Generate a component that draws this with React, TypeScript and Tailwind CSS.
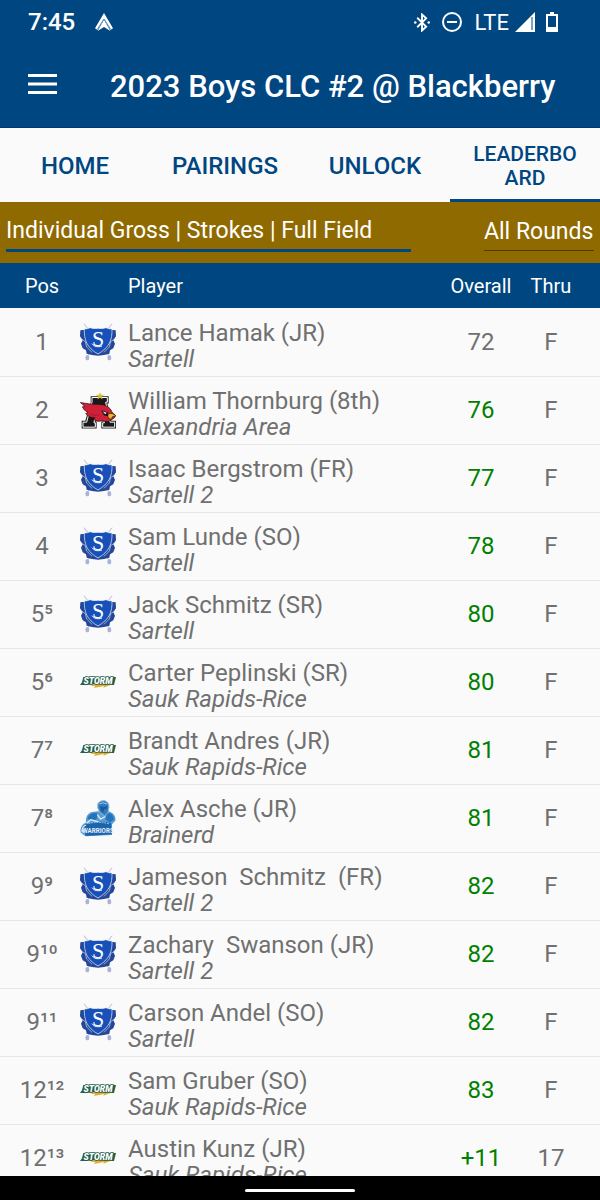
import type { ComponentType } from "react";

const SartellLogo = () => (
  <svg viewBox="30 36 108 114" className="h-[38px] w-9" aria-hidden="true">
    {/* Crossed clubs */}
    <g stroke="#b3bad9" strokeWidth="3" fill="none">
      <path d="M42 38 L121 140" />
      <path d="M126 38 L49 140" />
    </g>
    <g fill="#a9b3da">
      <ellipse cx="52" cy="140" rx="6" ry="8" />
      <ellipse cx="118" cy="140" rx="6" ry="8" />
    </g>
    {/* Ribbon */}
    <g fill="#24479a">
      <path d="M31 58 L46 56 L50 88 L60 106 L84 128 L84 134 L66 132 L50 128 L48 118 L38 112 L33 98 L38 88 L30 76 Z" />
      <path d="M137 58 L122 56 L118 88 L108 106 L84 128 L84 134 L102 132 L118 128 L120 118 L130 112 L135 98 L130 88 L138 76 Z" />
    </g>
    <path
      d="M34 84 L46 92 L50 108 L66 124 M134 84 L122 92 L118 108 L102 124"
      stroke="#d3ddf3"
      strokeWidth="2"
      fill="none"
    />
    {/* Shield */}
    <path
      d="M43 54 Q54 54 60 50 Q72 54 84 52 Q97 54 108 50 Q115 54 126 54 C127 86 118 110 84 129 C50 110 42 86 43 54 Z"
      fill="#1650b8"
      stroke="#f4f7fd"
      strokeWidth="2"
    />
    <text
      x="84"
      y="106"
      textAnchor="middle"
      fill="#fff"
      fontSize="66"
      fontFamily="Liberation Serif, serif"
    >
      S
    </text>
    <path d="M66 98 Q76 112 96 105" stroke="#fff" strokeWidth="3" fill="none" />
  </svg>
);

const AlexandriaLogo = () => (
  <svg viewBox="30 28 108 110" className="h-[37px] w-9" aria-hidden="true">
    {/* Block letter backing */}
    <path
      d="M62 40 H116 V62 H112 L124 114 H138 V137 H94 V116 H98 L97 112 H78 L77 116 H80 V137 H35 V114 H46 L61 62 H62 Z"
      fill="#222"
    />
    <path
      d="M66 44 H112 V58 H107 L120 118 H134 V133 H98 V120 H103 L101 108 H74 L72 120 H76 V133 H39 V118 H50 L66 58 Z"
      fill="#1b1819"
      stroke="#fff"
      strokeWidth="3"
    />
    {/* Cardinal head */}
    <path
      d="M31 59 Q62 65 88 65 Q118 65 127 89 L137 98 Q136 105 126 110 Q112 121 98 113 Q84 120 71 110 L75 104 Q57 106 47 92 L54 89 Q40 82 37 72 L45 71 Z"
      fill="#cf2037"
      stroke="#20151a"
      strokeWidth="2"
    />
    <path d="M94 82 L113 88 L116 100 L102 98 Z" fill="#171316" />
    <path d="M98 86 L110 90 L106 94 Z" fill="#fff" />
    <path
      d="M114 93 Q130 89 137 99 L127 102 L124 110 L114 104 Z"
      fill="#edb52f"
      stroke="#32200c"
      strokeWidth="2"
    />
    <path d="M60 94 Q74 101 88 96" stroke="#8d1a2d" strokeWidth="2" fill="none" />
    <path
      d="M90 28 L93 36 L102 36 L95 42 L98 50 L90 45 L82 50 L85 42 L78 36 L87 36 Z"
      fill="#d8bf2f"
    />
  </svg>
);

const StormLogo = () => (
  <svg viewBox="0 0 108 36" className="h-3 w-9" aria-hidden="true">
    <path d="M10 3 H108 L102 27 H76 L56 30 L30 27 H0 L6 19 Z" fill="#24604a" />
    <path d="M20 24 H98 L70 35 L72 30 L42 36 L46 30 Z" fill="#e6ad2d" />
    <text
      x="54"
      y="24"
      textAnchor="middle"
      fill="#fff"
      stroke="#24604a"
      strokeWidth="5"
      paintOrder="stroke"
      fontSize="26"
      fontWeight="900"
      fontStyle="italic"
      fontFamily="Roboto, sans-serif"
    >
      STORM
    </text>
  </svg>
);

const BrainerdLogo = () => (
  <svg viewBox="30 32 108 112" className="h-[37px] w-9" aria-hidden="true">
    {/* Cape and shoulders */}
    <path
      d="M31 130 C30 112 38 104 48 100 C46 84 52 72 66 68 L84 66 H112 C128 68 138 78 137 94 L126 106 V138 L46 142 Z"
      fill="#5a9bd2"
    />
    <path d="M52 88 Q60 68 82 72 L80 90 L64 96 Z" fill="#2474bd" />
    <path d="M112 70 Q132 73 132 92 L120 100 L106 90 Z" fill="#2474bd" />
    {/* Helmet */}
    <path
      d="M84 42 Q92 32 104 34 Q118 38 117 54 L114 72 L104 80 L90 70 Q80 56 84 42 Z"
      fill="#2d7cc2"
      stroke="#8db5d3"
      strokeWidth="3"
    />
    <path d="M91 50 L101 54 L112 50 L110 60 L102 59 L100 70 L92 62 Z" fill="#1c5796" />
    <path d="M88 44 Q98 37 112 44" stroke="#9ccbea" strokeWidth="3" fill="none" />
    <path d="M82 76 L92 90 L106 82 M50 102 L62 92 L86 98" stroke="#d7ebf8" strokeWidth="4" fill="none" />
    {/* Banner */}
    <path d="M44 106 Q84 92 124 102 L126 136 L46 141 Z" fill="#1c65ad" />
    <path d="M56 103 Q84 96 118 104" stroke="#a8cdea" strokeWidth="3" strokeDasharray="5 3" fill="none" />
    <text
      x="84"
      y="133"
      textAnchor="middle"
      fill="#e4f1fb"
      fontSize="19"
      fontWeight="700"
      fontFamily="Roboto, sans-serif"
    >
      WARRIORS
    </text>
    <path d="M36 130 C34 118 40 110 48 108" stroke="#fff" strokeWidth="3" fill="none" />
  </svg>
);

type Team = {
  name: string;
  Logo: ComponentType;
};

const sartell: Team = { name: "Sartell", Logo: SartellLogo };
const sartell2: Team = { name: "Sartell 2", Logo: SartellLogo };
const alexandria: Team = { name: "Alexandria Area", Logo: AlexandriaLogo };
const saukRapids: Team = { name: "Sauk Rapids-Rice", Logo: StormLogo };
const brainerd: Team = { name: "Brainerd", Logo: BrainerdLogo };

const players = [
  { pos: "1", name: "Lance Hamak (JR)", team: sartell, overall: "72", thru: "F", even: true },
  { pos: "2", name: "William Thornburg (8th)", team: alexandria, overall: "76", thru: "F" },
  { pos: "3", name: "Isaac Bergstrom (FR)", team: sartell2, overall: "77", thru: "F" },
  { pos: "4", name: "Sam Lunde (SO)", team: sartell, overall: "78", thru: "F" },
  { pos: "5⁵", name: "Jack Schmitz (SR)", team: sartell, overall: "80", thru: "F" },
  { pos: "5⁶", name: "Carter Peplinski (SR)", team: saukRapids, overall: "80", thru: "F" },
  { pos: "7⁷", name: "Brandt Andres (JR)", team: saukRapids, overall: "81", thru: "F" },
  { pos: "7⁸", name: "Alex Asche (JR)", team: brainerd, overall: "81", thru: "F" },
  { pos: "9⁹", name: "Jameson  Schmitz  (FR)", team: sartell2, overall: "82", thru: "F" },
  { pos: "9¹⁰", name: "Zachary  Swanson (JR)", team: sartell2, overall: "82", thru: "F" },
  { pos: "9¹¹", name: "Carson Andel (SO)", team: sartell, overall: "82", thru: "F" },
  { pos: "12¹²", name: "Sam Gruber (SO)", team: saukRapids, overall: "83", thru: "F" },
  { pos: "12¹³", name: "Austin Kunz (JR)", team: saukRapids, overall: "+11", thru: "17" },
];

const StatusBar = () => (
  <div className="flex h-11 items-center justify-between pl-7 pr-[42px] text-white">
    <div className="flex items-center gap-5">
      <span className="text-2xl font-medium">7:45</span>
      <svg viewBox="0 0 54 54" className="size-[18px]" aria-hidden="true">
        <path d="M27 0 L54 46 L46 51 L27 20 L8 51 L0 46 Z" fill="#fff" />
        <path d="M27 20 L46 54 L27 42 L8 54 Z" fill="#fff" />
        <path d="M7 49 L27 18 L47 49" stroke="#004681" strokeWidth="2" fill="none" />
      </svg>
    </div>
    <div className="flex items-center">
      <svg viewBox="0 0 50 58" className="mr-3 h-[19px] w-4" aria-hidden="true">
        <path d="M10 14 L38 42 L25 54 V4 L38 16 L10 44" stroke="#fff" strokeWidth="6" fill="none" />
        <circle cx="4" cy="29" r="4" fill="#fff" />
        <circle cx="46" cy="29" r="4" fill="#fff" />
      </svg>
      <svg viewBox="0 0 20 20" className="mr-3 size-5" aria-hidden="true">
        <circle cx="10" cy="10" r="9" stroke="#fff" strokeWidth="2" fill="none" />
        <path d="M5 10 H15" stroke="#fff" strokeWidth="2" />
      </svg>
      <span className="mr-1.5 text-[22px]">LTE</span>
      <svg viewBox="0 0 20 20" className="mr-[11px] size-5" aria-hidden="true">
        <path d="M20 0 V20 H0 Z" fill="#fff" />
        <path d="M17 5 V18" stroke="#004681" strokeWidth="1" />
      </svg>
      <svg viewBox="0 0 12 20" className="h-5 w-3" aria-hidden="true">
        <path d="M4 0 H8 V2 H12 V20 H0 V2 H4 Z" fill="#fff" />
        <path d="M2 4 H10 V15 H2 Z" fill="#004681" />
      </svg>
    </div>
  </div>
);

const App = () => {
  return (
    <div className="flex h-screen flex-col overflow-hidden bg-[#fafafa] font-['Roboto',sans-serif]">
      {/* App bar */}
      <header className="shrink-0 border-b border-[#003a70] bg-[#004681] text-white">
        <StatusBar />
        <div className="flex h-[83px] items-center gap-[53px] px-7">
          <button type="button" aria-label="Open menu" className="pb-1">
            <svg viewBox="0 0 29 20" className="h-5 w-[29px]" aria-hidden="true">
              <path d="M0 1.5 H29 M0 10 H29 M0 18.5 H29" stroke="#fff" strokeWidth="3" />
            </svg>
          </button>
          <h1 className="whitespace-nowrap pt-1 text-[31px] font-medium">
            2023 Boys CLC #2 @ Blackberry
          </h1>
        </div>
      </header>

      {/* Tabs */}
      <nav className="grid h-[74px] shrink-0 grid-cols-4 pt-0.5 text-center text-2xl font-medium text-[#004681]">
        <a href="#home" className="flex items-center justify-center">HOME</a>
        <a href="#pairings" className="flex items-center justify-center">PAIRINGS</a>
        <a href="#unlock" className="flex items-center justify-center">UNLOCK</a>
        <a
          href="#leaderboard"
          aria-current="page"
          className="flex items-center justify-center border-b-3 border-[#004681] px-5 pt-0.5 text-[21px] leading-6 break-all"
        >
          LEADERBOARD
        </a>
      </nav>

      {/* Filters */}
      <div className="flex h-[61px] shrink-0 items-start justify-between bg-[#8f6a00] px-1.5 pt-3 text-white">
        <select
          aria-label="Leaderboard"
          className="h-[38px] w-[405px] appearance-none border-b-3 border-[#004681] bg-transparent text-[23px]"
        >
          <option>Individual Gross | Strokes | Full Field</option>
        </select>
        <select
          aria-label="Round"
          className="h-[37px] appearance-none border-b border-[#4f3a00] bg-transparent text-[23px]"
        >
          <option>All Rounds</option>
        </select>
      </div>

      {/* Standings */}
      <main className="min-h-0 flex-1 overflow-hidden">
        <table className="w-full table-fixed border-collapse text-2xl text-[#707070]">
          <colgroup>
            <col className="w-20" />
            <col className="w-12" />
            <col />
            <col className="w-[70px]" />
            <col className="w-[84px]" />
          </colgroup>
          <thead className="bg-[#004681] text-xl text-white">
            <tr className="h-[45px]">
              <th className="pl-1 font-normal">Pos</th>
              <th aria-label="Team logo" />
              <th className="text-left font-normal">Player</th>
              <th className="font-normal">Overall</th>
              <th className="pr-3.5 font-normal">Thru</th>
            </tr>
          </thead>
          <tbody>
            {players.map(({ pos, name, team, overall, thru, even }) => (
              <tr key={name} className="h-17 border-b border-[#e6e6e6] text-center">
                <td className="pl-1">{pos}</td>
                <td>
                  <team.Logo />
                </td>
                <td className="pt-2 text-left leading-[26px] whitespace-pre">
                  <div>{name}</div>
                  <div className="italic">{team.name}</div>
                </td>
                <td className={even ? "" : "text-[#008000]"}>{overall}</td>
                <td className="pr-3.5">{thru}</td>
              </tr>
            ))}
          </tbody>
        </table>
      </main>

      {/* Gesture bar */}
      <footer className="flex h-6 shrink-0 items-center justify-center bg-black pt-1">
        <div className="h-[3px] w-[110px] rounded-full bg-white" />
      </footer>
    </div>
  );
};

export default App;
